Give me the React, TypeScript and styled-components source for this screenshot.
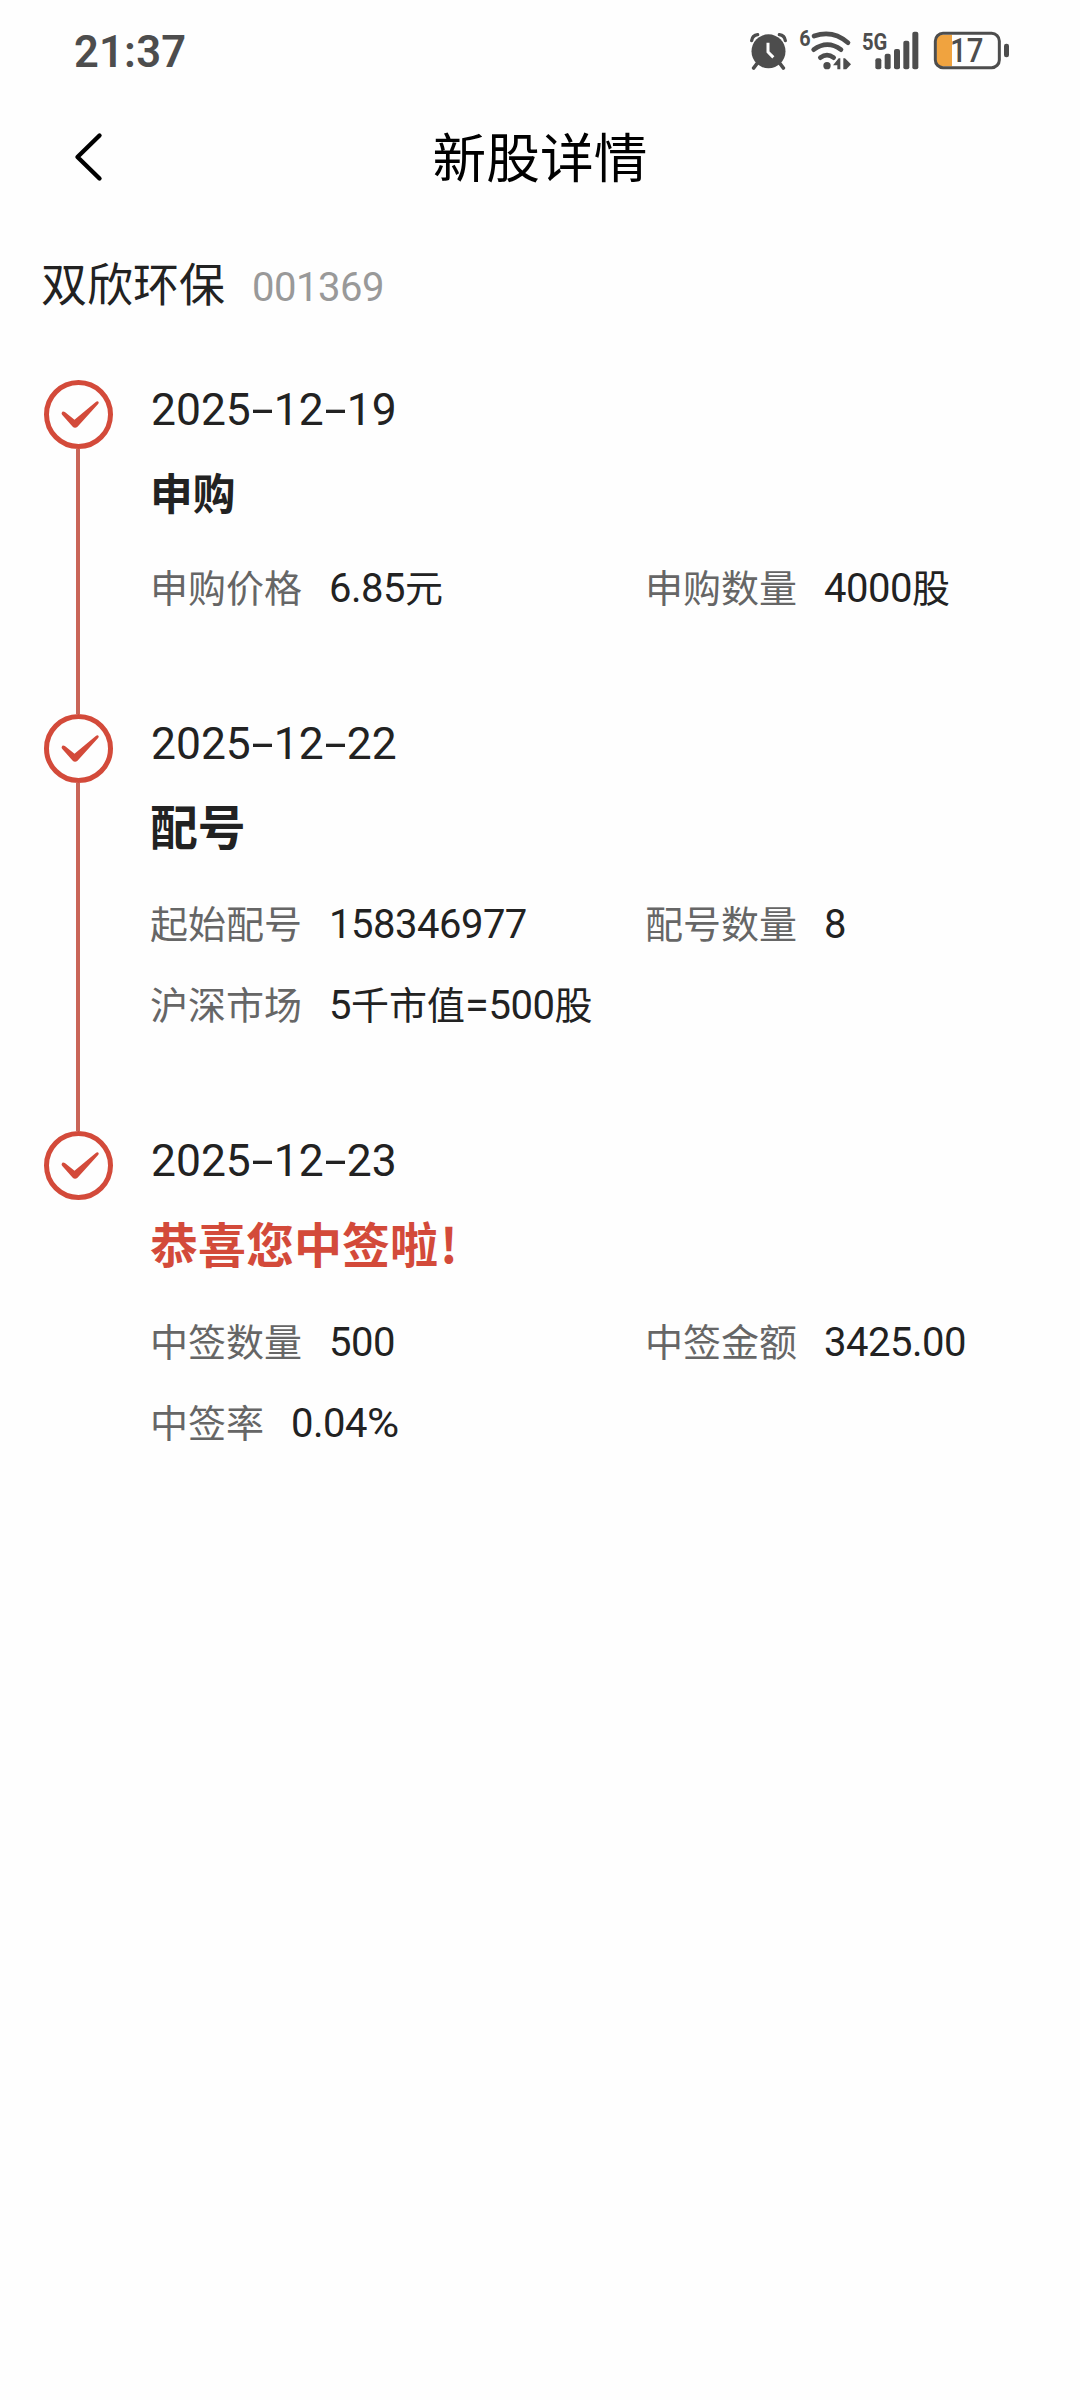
import React from "react";
import styled, { createGlobalStyle } from "styled-components";

const CJK = `"Noto Sans CJK SC", sans-serif`;
const NUM = `Roboto, "Noto Sans CJK SC", sans-serif`;
const RED = "#d34a3a";
const INK = "#222222";
const STATUS = "#4d4d4d";

const GlobalStyle = createGlobalStyle`
  * { box-sizing: border-box; }
  body { margin: 0; background: #fefefe; }
`;

const Screen = styled.main`
  width: 1080px;
  min-height: 2400px;
  background: #fefefe;
  color: ${INK};
  font-family: ${CJK};
  display: flex;
  flex-direction: column;
`;

const StatusBar = styled.div`
  height: 100px;
  padding: 26px 70px 0 74px;
  display: flex;
  justify-content: space-between;
  align-items: flex-start;
`;

const Clock = styled.time`
  margin-top: 2px;
  font: 600 43.5px/50px ${NUM};
  letter-spacing: 0.2px;
  color: ${STATUS};
`;

const Indicators = styled.div`
  display: flex;
`;

const Icon = styled.svg<{ $gap?: number }>`
  display: block;
  height: 48px;
  margin-left: ${(p) => p.$gap ?? 0}px;
  overflow: visible;
`;

const NavBar = styled.header`
  height: 114px;
  padding: 0 70px;
  display: grid;
  grid-template-columns: 60px 1fr 60px;
  align-items: center;
`;

const BackButton = styled.button`
  width: 60px;
  height: 60px;
  padding: 0;
  border: 0;
  background: none;
  display: flex;
  align-items: center;
`;

const PageTitle = styled.h1`
  margin: 0 0 4px;
  text-align: center;
  font: 400 53.7px/108px ${CJK};
  color: #000;
`;

const Stock = styled.section`
  height: 166px;
  padding: 31px 41px 0;
  display: flex;
  align-items: baseline;
  gap: 27px;
`;

const StockName = styled.h2`
  margin: 0;
  font: 400 46px/72px ${CJK};
`;

const StockCode = styled.span`
  font: 400 40px/40px ${NUM};
  letter-spacing: -0.5px;
  color: #999;
`;

const Timeline = styled.ol`
  list-style: none;
  margin: 0;
  padding: 0 0 0 44px;
`;

const Step = styled.li<{ $height: number }>`
  height: ${(p) => p.$height}px;
  display: flex;
`;

const Rail = styled.div`
  width: 69px;
  display: flex;
  flex-direction: column;
  align-items: center;
`;

const RailLine = styled.div`
  width: 4px;
  margin-right: 1px;
  flex: 1;
  background: #c96558;
`;

const StepBody = styled.div`
  flex: 1;
  padding-left: 37px;
`;

const StepDate = styled.div`
  display: flex;
  padding-left: 1px;
  font: 400 44.4px/60px ${NUM};
`;

const Hyphen = styled.span`
  width: 23px;
  text-align: center;
  transform: scaleX(1.8);
`;

const StepTitle = styled.h3<{ $size: number; $red?: boolean; $after: number }>`
  margin: 9px 0 ${(p) => p.$after}px;
  font: 700 ${(p) => p.$size}px/84px ${CJK};
  color: ${(p) => (p.$red ? RED : INK)};
`;

const Exclamation = styled.span`
  margin-left: 2px;
`;

const Fields = styled.dl`
  margin: 0;
  display: grid;
  grid-template-columns: 495px 1fr;
  grid-auto-rows: 81px;
`;

const Field = styled.div`
  display: flex;
  gap: 27px;
  font: 400 38px/81px ${CJK};
  white-space: nowrap;
`;

const Label = styled.dt`
  color: #666;
`;

const Value = styled.dd`
  margin: 0;
`;

const Digits = styled.span`
  font: 400 40px/0 ${NUM};
  letter-spacing: -0.5px;
`;

const WideSign = styled.span<{ $width: number; $scale: number }>`
  display: inline-block;
  width: ${(p) => p.$width}px;
  transform: scaleX(${(p) => p.$scale});
  transform-origin: left;
  font: 400 40px/1 ${NUM};
`;

type FieldData = [label: string, value: string];

interface StepData {
  date: string;
  title: string;
  size: number;
  red?: boolean;
  height: number;
  after: number;
  fields: FieldData[];
}

const steps: StepData[] = [
  {
    date: "2025-12-19", title: "申购", size: 42.7, height: 334, after: 12,
    fields: [["申购价格", "6.85元"], ["申购数量", "4000股"]],
  },
  {
    date: "2025-12-22", title: "配号", size: 47.8, height: 417, after: 14,
    fields: [["起始配号", "158346977"], ["配号数量", "8"], ["沪深市场", "5千市值=500股"]],
  },
  {
    date: "2025-12-23", title: "恭喜您中签啦!", size: 48, red: true, height: 300, after: 15,
    fields: [["中签数量", "500"], ["中签金额", "3425.00"], ["中签率", "0.04%"]],
  },
];

const AlarmIcon = () => (
  <Icon width="39" viewBox="57 48 117 144" fill={STATUS}>
    <g fill="none" stroke={STATUS} strokeLinecap="round">
      <path d="M65 92 Q67 76 83 74" strokeWidth="10" />
      <path d="M166 92 Q164 76 148 74" strokeWidth="10" />
      <path d="M80 162 L71 174 M151 162 L160 174" strokeWidth="11" />
    </g>
    <circle cx="115.5" cy="124" r="51" />
    <path d="M114 98 V126 L130 142" fill="none" stroke="#fefefe" strokeWidth="9" />
  </Icon>
);

const WifiIcon = () => (
  <Icon width="54" viewBox="207 48 162 144" $gap={11} fill={STATUS}>
    <text x="208" y="108" fontFamily="Roboto" fontWeight="700" fontSize="66" textLength="34" lengthAdjust="spacingAndGlyphs">6</text>
    <g fill="none" stroke={STATUS} strokeWidth="14" strokeLinecap="round">
      <path d="M252 78 Q308 58 354 98" />
      <path d="M251 119 Q292 89 333 119" />
      <path d="M271 143 Q291 128 311 143" />
    </g>
    <circle cx="291" cy="167" r="11" />
    <path d="M309 166 L326 145 H331 V178 H322 V166 Z" />
    <path d="M340 145 H345 L363 163 L349 178 H340 Z" />
  </Icon>
);

const SignalIcon = () => (
  <Icon width="59" viewBox="393 48 177 144" $gap={8} fill={STATUS}>
    <text x="396" y="120" fontFamily="Roboto" fontWeight="700" fontSize="74" textLength="76" lengthAdjust="spacingAndGlyphs">5G</text>
    <rect x="436" y="145" width="18" height="33" rx="6" />
    <rect x="464" y="131" width="18" height="47" rx="6" />
    <rect x="492" y="117" width="18" height="61" rx="6" />
    <rect x="520" y="92" width="18" height="86" rx="6" />
    <rect x="547" y="65" width="18" height="113" rx="6" />
  </Icon>
);

const BatteryIcon = () => (
  <Icon width="78" viewBox="606 48 234 144" $gap={12} fill={STATUS}>
    <path d="M666 74 H636 Q619 74 619 92 V151 Q619 169 636 169 H666 Z" fill="#f0a33f" />
    <rect x="616" y="70" width="192" height="103" rx="23" fill="none" stroke={STATUS} strokeWidth="9" />
    <rect x="822" y="101" width="15" height="41" rx="7" />
    <text x="660" y="156" fontFamily="Roboto" fontWeight="500" fontSize="98" textLength="100" lengthAdjust="spacingAndGlyphs">17</text>
  </Icon>
);

const CheckMark = () => (
  <svg width="69" height="69" viewBox="-34.5 -34.5 69 69">
    <circle r="32" fill="none" stroke={RED} strokeWidth="5" />
    <path
      d="M-16.8 -1.6 Q-16 -4 -13.6 -2.4 L-4 5.2 L17.6 -12.8 Q19.4 -14 20.2 -12.2 Q20.4 -11.2 19.4 -10.2 L-1 12.2 Q-3.6 14.4 -6 12 L-16.2 0.6 Q-17.2 -0.6 -16.8 -1.6 Z"
      fill={RED}
    />
  </svg>
);

const renderDate = (date: string) =>
  date.split(/(-)/).map((part, i) =>
    part === "-" ? <Hyphen key={i}>-</Hyphen> : <span key={i}>{part}</span>
  );

const renderTitle = (title: string) =>
  title.endsWith("!") ? (
    <>
      {title.slice(0, -1)}
      <Exclamation>!</Exclamation>
    </>
  ) : (
    title
  );

const renderValue = (value: string) =>
  value.split(/([0-9.]+|[=%])/).filter(Boolean).map((part, i) => {
    if (part === "=") return <WideSign key={i} $width={23.5} $scale={1.08}>=</WideSign>;
    if (part === "%") return <WideSign key={i} $width={31} $scale={1.1}>%</WideSign>;
    return /^[0-9.]/.test(part) ? <Digits key={i}>{part}</Digits> : part;
  });

export default function App() {
  return (
    <>
      <GlobalStyle />
      <Screen>
        <StatusBar>
          <Clock>21:37</Clock>
          <Indicators>
            <AlarmIcon />
            <WifiIcon />
            <SignalIcon />
            <BatteryIcon />
          </Indicators>
        </StatusBar>
        <NavBar>
          <BackButton aria-label="返回">
            <svg width="40" height="60" viewBox="0 0 40 60">
              <path d="M29.5 8.5 L7.5 30 L29.5 51.5" fill="none" stroke="#000" strokeWidth="4.4" strokeLinecap="round" strokeLinejoin="round" />
            </svg>
          </BackButton>
          <PageTitle>新股详情</PageTitle>
        </NavBar>
        <Stock>
          <StockName>双欣环保</StockName>
          <StockCode>001369</StockCode>
        </Stock>
        <Timeline>
          {steps.map((step, i) => (
            <Step key={step.date} $height={step.height}>
              <Rail>
                <CheckMark />
                {i < steps.length - 1 && <RailLine />}
              </Rail>
              <StepBody>
                <StepDate>{renderDate(step.date)}</StepDate>
                <StepTitle $size={step.size} $red={step.red} $after={step.after}>{renderTitle(step.title)}</StepTitle>
                <Fields>
                  {step.fields.map(([label, value]) => (
                    <Field key={label}>
                      <Label>{label}</Label>
                      <Value>{renderValue(value)}</Value>
                    </Field>
                  ))}
                </Fields>
              </StepBody>
            </Step>
          ))}
        </Timeline>
      </Screen>
    </>
  );
}
